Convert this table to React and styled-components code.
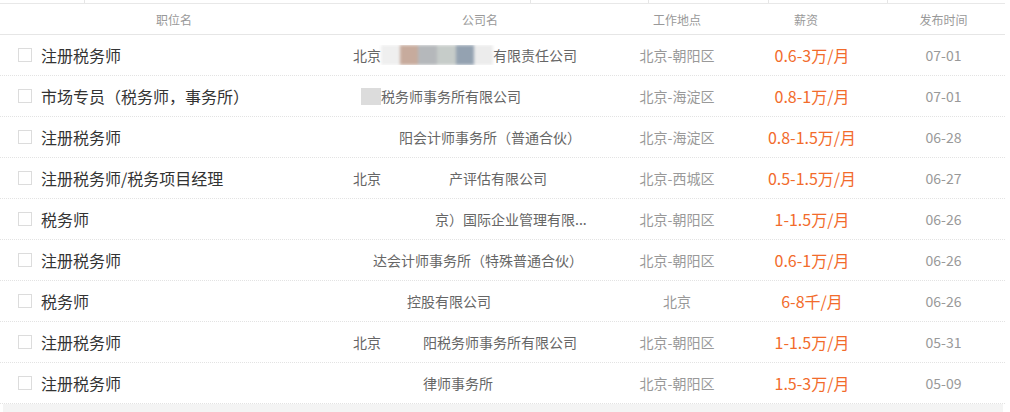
import React from "react";
import styled, { createGlobalStyle } from "styled-components";

const Global = createGlobalStyle`
  html, body { margin: 0; padding: 0; background: #fff; }
  body { font-family: "Noto Sans CJK SC", "Noto Sans", sans-serif; }
`;

const Page = styled.div`
  width: 1010px;
  display: flex;
  flex-direction: column;
`;

const TopStrip = styled.div`
  display: grid;
  grid-template-columns: 84px 446px 118px 120px 119px 1fr;
  height: 3px;
  border-bottom: 1px solid #e8e8e8;
  width: 1005px;
`;

const StripCell = styled.div`
  border-left: ${(p) => (p.$first ? "none" : "1px solid #e6e6e6")};
`;

const Table = styled.div`
  width: 1005px;
  display: flex;
  flex-direction: column;
`;

const cols = "348px 264px 130px 140px 1fr";

const HeaderRow = styled.div`
  display: grid;
  grid-template-columns: ${cols};
  height: 30px;
  align-items: center;
  border-bottom: 1px solid #e6e6e6;
`;

const HeadCell = styled.div`
  text-align: center;
  font-size: 12px;
  color: #999;
  transform: translateX(${(p) => p.$shift || 0}px);
`;

const Row = styled.div`
  display: grid;
  grid-template-columns: ${cols};
  height: 40px;
  align-items: center;
  border-bottom: 1px dotted #e3e3e3;
`;

const TitleCell = styled.div`
  display: flex;
  align-items: center;
  padding-left: 18px;
  gap: 9px;
  font-size: 16px;
  color: #333;
  white-space: nowrap;
  margin-top: -1px;
`;

const Check = styled.span`
  width: 12px;
  height: 12px;
  border: 1px solid #dcdcdc;
  background: #fff;
  flex: none;
`;

const CompanyCell = styled.div`
  display: flex;
  align-items: center;
  padding-left: 5px;
  font-size: 14px;
  color: #666;
  white-space: nowrap;
  overflow: hidden;
`;

const Redact = styled.span`
  display: inline-flex;
  justify-content: flex-end;
  width: ${(p) => p.$w}px;
  height: 20px;
  flex: none;
`;

const Patch = styled.span`
  width: 20px;
  height: 17px;
  margin-top: 2px;
  background: #dcdcdc;
  filter: blur(0.6px);
`;

const Mosaic = styled.span`
  display: inline-flex;
  width: ${(p) => p.$w}px;
  height: 20px;
  flex: none;
  filter: blur(1.5px);
`;

const Tile = styled.span`
  flex: 1;
  background: ${(p) => p.$c};
`;

const Center = styled.div`
  text-align: center;
  font-size: 14px;
  color: #999;
  white-space: nowrap;
`;

const Salary = styled.div`
  text-align: center;
  font-size: 16px;
  color: #f26b2b;
  white-space: nowrap;
`;

const Footer = styled.div`
  height: 8px;
  margin-left: 3px;
  width: 1000px;
  background: #f4f4f4;
`;

const rows = [
  { t: "注册税务师", c: [["北京"], ["m", 112], ["有限责任公司"]], l: "北京-朝阳区", s: "0.6-3万/月", d: "07-01" },
  { t: "市场专员（税务师，事务所）", c: [["p", 28], ["税务师事务所有限公司"]], l: "北京-海淀区", s: "0.8-1万/月", d: "07-01" },
  { t: "注册税务师", c: [["r", 46], ["阳会计师事务所（普通合伙）"]], l: "北京-海淀区", s: "0.8-1.5万/月", d: "06-28" },
  { t: "注册税务师/税务项目经理", c: [["北京"], ["r", 68], ["产评估有限公司"]], l: "北京-西城区", s: "0.5-1.5万/月", d: "06-27" },
  { t: "税务师", c: [["r", 82], ["京）国际企业管理有限..."]], l: "北京-朝阳区", s: "1-1.5万/月", d: "06-26" },
  { t: "注册税务师", c: [["r", 20], ["达会计师事务所（特殊普通合伙）"]], l: "北京-朝阳区", s: "0.6-1万/月", d: "06-26" },
  { t: "税务师", c: [["r", 54], ["控股有限公司"]], l: "北京", s: "6-8千/月", d: "06-26" },
  { t: "注册税务师", c: [["北京"], ["r", 42], ["阳税务师事务所有限公司"]], l: "北京-朝阳区", s: "1-1.5万/月", d: "05-31" },
  { t: "注册税务师", c: [["r", 70], ["律师事务所"]], l: "北京-朝阳区", s: "1.5-3万/月", d: "05-09" },
];

const tiles = ["#efefef", "#c7ab9d", "#b5b8bb", "#c6ccc9", "#94a2b1", "#ececec"];

function Company({ parts }) {
  return (
    <CompanyCell>
      {parts.map((p, i) => {
        if (p[0] === "m")
          return (
            <Mosaic key={i} $w={p[1]}>
              {tiles.map((c) => (
                <Tile key={c} $c={c} />
              ))}
            </Mosaic>
          );
        if (p[0] === "r") return <Redact key={i} $w={p[1]} />;
        if (p[0] === "p")
          return (
            <Redact key={i} $w={p[1]}>
              <Patch />
            </Redact>
          );
        return <span key={i}>{p[0]}</span>;
      })}
    </CompanyCell>
  );
}

export default function App() {
  return (
    <Page>
      <Global />
      <TopStrip>
        <StripCell $first />
        <StripCell />
        <StripCell />
        <StripCell />
        <StripCell />
        <StripCell />
      </TopStrip>
      <Table>
        <HeaderRow>
          <HeadCell>职位名</HeadCell>
          <HeadCell>公司名</HeadCell>
          <HeadCell>工作地点</HeadCell>
          <HeadCell $shift={-6}>薪资</HeadCell>
          <HeadCell>发布时间</HeadCell>
        </HeaderRow>
        {rows.map((r, i) => (
          <Row key={i}>
            <TitleCell>
              <Check />
              {r.t}
            </TitleCell>
            <Company parts={r.c} />
            <Center>{r.l}</Center>
            <Salary>{r.s}</Salary>
            <Center>{r.d}</Center>
          </Row>
        ))}
      </Table>
      <Footer />
    </Page>
  );
}
